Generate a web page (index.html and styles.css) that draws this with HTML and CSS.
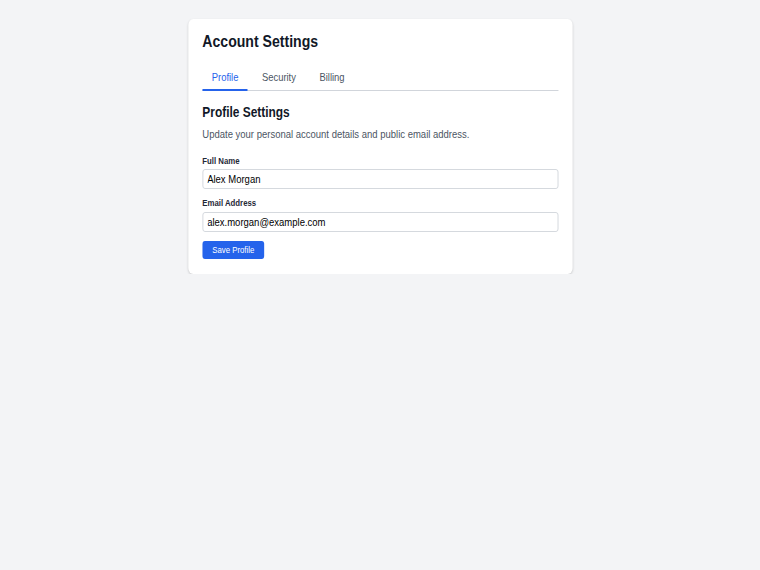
FILE: index.html
```html
<!DOCTYPE html>
<html lang="en">
<head>
    <meta charset="UTF-8">
    <meta name="viewport" content="width=device-width, initial-scale=1.0">
    <title>Account Settings</title>
    <link rel="stylesheet" href="styles.css">
</head>
<body>
    <div class="card">
        <h1>Account Settings</h1>
        <div class="tabs">
            <span class="tab active">Profile</span>
            <span class="tab">Security</span>
            <span class="tab">Billing</span>
        </div>
        <h2>Profile Settings</h2>
        <p class="desc">Update your personal account details and public email address.</p>
        <div class="field">
            <label>Full Name</label>
            <input type="text" value="Alex Morgan">
        </div>
        <div class="field">
            <label>Email Address</label>
            <input type="text" value="alex.morgan@example.com">
        </div>
        <button class="btn">Save Profile</button>
    </div>
</body>
</html>
```

FILE: styles.css
```css
body, html {
    margin: 0;
    padding: 0;
}
body {
    background: #f3f4f6;
    font-family: "Liberation Sans", Arial, sans-serif;
    color: #111827;
    padding-top: 19px;
}
/* the whole card is drawn a bit narrow, like the original capture */
.card {
    width: 460.6px;
    box-sizing: border-box;
    margin: 0 auto;
    background: #fff;
    border-radius: 6px;
    box-shadow: 0 1px 3px rgba(0, 0, 0, 0.1), 0 1px 2px rgba(0, 0, 0, 0.06);
    padding: 13px 16.8px 14.7px;
    transform: scaleX(0.8337);
    transform-origin: top center;
}
h1 {
    font-size: 16.9px;
    font-weight: 700;
    line-height: 20px;
    margin: 0 0 12.8px;
}
.tabs {
    display: flex;
    gap: 5.6px;
    border-bottom: 1px solid #d1d5db;
    margin-bottom: 12.6px;
}
.tab {
    font-size: 11.3px;
    line-height: 13px;
    color: #4b5563;
    padding: 5.94px 11.3px 5.2px;
    border-bottom: 2px solid transparent;
    margin-bottom: -1px;
}
.tab.active {
    color: #2563eb;
    border-bottom-color: #2563eb;
}
h2 {
    font-size: 14.3px;
    font-weight: 700;
    line-height: 17px;
    margin: 0 0 6.9px;
}
.desc {
    font-size: 11.4px;
    line-height: 15px;
    color: #4b5563;
    margin: 0 0 13.7px;
}
.field {
    margin-bottom: 9px;
}
.field label {
    display: block;
    font-size: 9.36px;
    font-weight: 700;
    line-height: 11px;
    color: #1f2937;
    margin-bottom: 2.3px;
}
.field input {
    display: block;
    width: 100%;
    height: 20px;
    box-sizing: border-box;
    border: 1px solid #d1d5db;
    border-radius: 3px;
    padding: 0 4.8px;
    font-family: "Liberation Sans", Arial, sans-serif;
    font-size: 11.4px;
    color: #000;
    background: #fff;
}
.btn {
    display: block;
    margin-top: 9.8px;
    height: 18px;
    padding: 0 12px;
    background: #2563eb;
    color: #fff;
    border: none;
    border-radius: 3px;
    font-family: "Liberation Sans", Arial, sans-serif;
    font-size: 9.36px;
}
```
